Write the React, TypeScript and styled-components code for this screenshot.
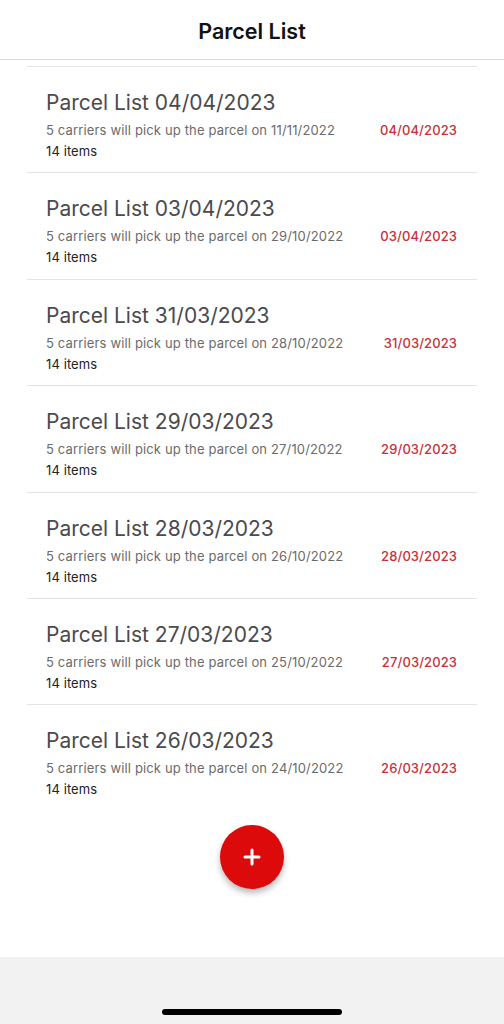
import React from 'react';
import styled, { createGlobalStyle } from 'styled-components';

const GlobalStyle = createGlobalStyle`
  html, body {
    margin: 0;
    padding: 0;
    background: #ffffff;
  }
  body {
    font-family: Inter, Roboto, "Noto Sans", sans-serif;
    -webkit-font-smoothing: antialiased;
  }
`;

const Screen = styled.div`
  display: flex;
  flex-direction: column;
  width: 504px;
  height: 1024px;
  overflow: hidden;
`;

const Header = styled.header`
  display: flex;
  align-items: center;
  justify-content: center;
  height: 60px;
  padding-top: 3px;
  box-sizing: border-box;
  flex-shrink: 0;
  border-bottom: 1px solid #d9d9d9;
`;

const HeaderTitle = styled.h1`
  margin: 0;
  font-size: 21.5px;
  font-weight: 600;
  color: #111111;
  letter-spacing: 0;
`;

const Content = styled.main`
  display: flex;
  flex-direction: column;
  flex: 1;
  padding: 6px 27px 0;
`;

const List = styled.ul`
  list-style: none;
  margin: 0;
  padding: 0;
`;

const Row = styled.li`
  display: flex;
  flex-direction: column;
  height: 106.4px;
  box-sizing: border-box;
  padding: 23px 20px 0 19px;
  border-top: 1px solid #e3e3e3;
`;

const Title = styled.div`
  font-size: 21px;
  line-height: 26px;
  color: #4a4a4f;
  letter-spacing: 0;
`;

const Line = styled.div`
  display: flex;
  align-items: center;
  justify-content: space-between;
  margin-top: 5px;
  height: 18px;
`;

const Subtitle = styled.span`
  font-size: 13px;
  color: #6b6b6b;
  letter-spacing: 0.15px;
`;

const DueDate = styled.span`
  font-size: 13px;
  font-weight: 500;
  color: #c9313a;
  letter-spacing: 0.1px;
`;

const Count = styled.div`
  margin-top: 3px;
  font-size: 13px;
  line-height: 18px;
  color: #222222;
  letter-spacing: 0.1px;
`;

const FabWrap = styled.div`
  display: flex;
  justify-content: center;
  margin-top: 14px;
`;

const Fab = styled.button`
  display: flex;
  align-items: center;
  justify-content: center;
  width: 64px;
  height: 64px;
  padding: 0;
  border: none;
  border-radius: 50%;
  background: #dc0a0a;
  box-shadow: 0 4px 6px rgba(0, 0, 0, 0.28);
  cursor: pointer;
`;

const Footer = styled.div`
  display: flex;
  align-items: flex-end;
  justify-content: center;
  height: 67px;
  flex-shrink: 0;
  background: #f2f2f2;
`;

const HomeIndicator = styled.div`
  width: 180px;
  height: 6px;
  margin-bottom: 9px;
  border-radius: 3px;
  background: #000000;
`;

const parcels = [
  { date: '04/04/2023', pickup: '11/11/2022' },
  { date: '03/04/2023', pickup: '29/10/2022' },
  { date: '31/03/2023', pickup: '28/10/2022' },
  { date: '29/03/2023', pickup: '27/10/2022' },
  { date: '28/03/2023', pickup: '26/10/2022' },
  { date: '27/03/2023', pickup: '25/10/2022' },
  { date: '26/03/2023', pickup: '24/10/2022' },
];

const App = () => (
  <>
    <GlobalStyle />
    <Screen>
      <Header>
        <HeaderTitle>Parcel List</HeaderTitle>
      </Header>
      <Content>
        <List>
          {parcels.map((p) => (
            <Row key={p.date}>
              <Title>Parcel List {p.date}</Title>
              <Line>
                <Subtitle>5 carriers will pick up the parcel on {p.pickup}</Subtitle>
                <DueDate>{p.date}</DueDate>
              </Line>
              <Count>14 items</Count>
            </Row>
          ))}
        </List>
        <FabWrap>
          <Fab aria-label="Add parcel list">
            <svg width="18" height="18" viewBox="0 0 18 18">
              <path d="M9 2v14M2 9h14" stroke="#ffffff" strokeWidth="3" strokeLinecap="round" />
            </svg>
          </Fab>
        </FabWrap>
      </Content>
      <Footer>
        <HomeIndicator />
      </Footer>
    </Screen>
  </>
);

export default App;
